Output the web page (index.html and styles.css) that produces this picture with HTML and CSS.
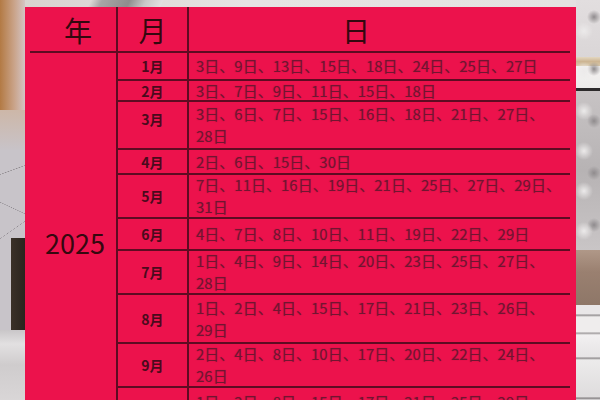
FILE: index.html
```html
<!DOCTYPE html>
<html lang="zh-CN">
<head>
<meta charset="utf-8">
<title>2025 日期表</title>
<link rel="stylesheet" href="styles.css">
</head>
<body>
<div class="scene">
  <div class="side side-left"></div>
  <div class="middle">
    <div class="top-band"></div>
    <div class="sheet">
      <div class="grid">
        <div class="head head-year">年</div>
        <div class="head head-month">月</div>
        <div class="head head-day">日</div>

        <div class="year">2025</div>

        <div class="month">1月</div>
        <div class="days">3日、9日、13日、15日、18日、24日、25日、27日</div>

        <div class="month">2月</div>
        <div class="days">3日、7日、9日、11日、15日、18日</div>

        <div class="month month-high">3月</div>
        <div class="days">3日、6日、7日、15日、16日、18日、21日、27日、<br>28日</div>

        <div class="month">4月</div>
        <div class="days">2日、6日、15日、30日</div>

        <div class="month">5月</div>
        <div class="days">7日、11日、16日、19日、21日、25日、27日、29日、<br>31日</div>

        <div class="month">6月</div>
        <div class="days">4日、7日、8日、10日、11日、19日、22日、29日</div>

        <div class="month">7月</div>
        <div class="days">1日、4日、9日、14日、20日、23日、25日、27日、<br>28日</div>

        <div class="month">8月</div>
        <div class="days">1日、2日、4日、15日、17日、21日、23日、26日、<br>29日</div>

        <div class="month">9月</div>
        <div class="days">2日、4日、8日、10日、17日、20日、22日、24日、<br>26日</div>

        <div class="month">10月</div>
        <div class="days days-top">1日、2日、8日、15日、17日、21日、25日、29日</div>
      </div>
    </div>
  </div>
  <div class="side side-right"></div>
</div>
</body>
</html>
```

FILE: styles.css
```css
* {
  box-sizing: border-box;
}

html, body {
  margin: 0;
  padding: 0;
}

body {
  width: 600px;
  height: 400px;
  overflow: hidden;
  font-family: "Noto Sans CJK SC", "Noto Sans", sans-serif;
  background: #d6d2d4;
}

.scene {
  display: flex;
  width: 600px;
  height: 400px;
  overflow: hidden;
}

.side {
  flex: none;
  height: 400px;
}

.side-left {
  width: 25px;
  background:
    /* vase */
    linear-gradient(to right, #3a3128, #2a241e) 11px 238px / 14px 92px no-repeat,
    /* plant branches */
    linear-gradient(160deg, transparent 49%, #8a8589 50%, transparent 51%) 0 150px / 25px 40px no-repeat,
    linear-gradient(25deg, transparent 49%, #8d888e 50%, transparent 51%) 0 190px / 25px 36px no-repeat,
    linear-gradient(145deg, transparent 49%, #918c92 50%, transparent 51%) 0 218px / 25px 24px no-repeat,
    /* floor */
    linear-gradient(#c9c6c8, #e2e0e1 20%, #cfcccd 50%, #d9d6d7) 0 330px / 25px 70px no-repeat,
    /* warm top-left light */
    linear-gradient(to right, #b37a44, #c9a287 55%, #d4c4c4) 0 0 / 25px 110px no-repeat,
    linear-gradient(#cdb7a8, #c8c3c8) 0 110px / 25px 40px no-repeat,
    #c8c4c9;
}

.side-right {
  width: 24px;
  background:
    /* couch cushions */
    linear-gradient(#e9e7e8 0, #e9e7e8 9px, #8e8a8c 10px, #efeded 12px, #efeded 27px, #9a9698 28px, #f2f0f1 30px, #e6e4e5 52px, #8a8688 53px, #ecebeb 55px, #dedcdd 92px, #7d797b 93px, #e5e3e4 95px) 0 305px / 24px 95px no-repeat,
    /* tan cushion */
    linear-gradient(#b09888, #9a8070 40%, #8e7768) 0 250px / 24px 55px no-repeat,
    /* textured wall art */
    radial-gradient(circle at 8px 20px, #eceaea 0, transparent 9px) 0 91px / 24px 40px repeat-y,
    radial-gradient(circle at 18px 30px, #8f8b8d 0, transparent 7px) 0 91px / 24px 52px repeat-y,
    linear-gradient(#c7c3c4, #b7b3b4 50%, #c9c5c6) 0 91px / 24px 159px no-repeat,
    /* dark frame line */
    linear-gradient(#2c2a2b, #2c2a2b) 0 88px / 24px 3px no-repeat,
    /* white shelf */
    linear-gradient(#f4f2f1, #ecebea) 0 66px / 24px 22px no-repeat,
    /* beige band */
    linear-gradient(#e3d7c0, #cdb593 50%, #d9c8aa) 0 57px / 24px 9px no-repeat,
    linear-gradient(#e2dedf, #dad6d7) 0 0 / 24px 57px no-repeat,
    #dcd8d9;
}

.middle {
  flex: none;
  width: 551px;
  height: 400px;
  display: flex;
  flex-direction: column;
}

.top-band {
  flex: none;
  height: 7px;
  background:
    linear-gradient(115deg, transparent 0, transparent 60px, #a7a5a6 70px, #8f8d8e 95px, #c9c7c8 110px, #e2e0e0 125px, transparent 126px),
    linear-gradient(to right, #d9d3d0, #e6e3e3 40%, #e4e1e1);
}

.sheet {
  flex: 1;
  min-height: 0;
  overflow: hidden;
  background: #ec124c;
  padding: 0 6px 0 5px;
}

.grid {
  display: grid;
  grid-template-columns: 86px 71px 1fr;
  grid-template-rows: 46px 28px 21px 48px 25px 44px 32px 44px 49px 44px 60px;
  color: #6f1430;
}

.head {
  border-bottom: 2px solid #5e0b22;
  display: flex;
  align-items: center;
  font-size: 28px;
  color: #33080f;
  line-height: 1;
  padding-top: 2px;
}

.head-year {
  justify-content: center;
  padding-left: 10px;
}

.head-month {
  justify-content: center;
  border-left: 2px solid #5e0b22;
}

.head-day {
  border-left: 2px solid #5e0b22;
  padding-left: 153px;
}

.year {
  grid-column: 1;
  grid-row: 2 / -1;
  font-size: 27px;
  color: #35080f;
  line-height: 36px;
  padding-top: 172px;
  padding-left: 4px;
  text-align: center;
}

.month {
  grid-column: 2;
  border-left: 2px solid #5e0b22;
  border-bottom: 2px solid #5e0b22;
  display: flex;
  align-items: center;
  justify-content: center;
  font-size: 14px;
  font-weight: 700;
  color: #4a0a1c;
}

.month-high {
  padding-bottom: 12px;
}

.days {
  grid-column: 3;
  border-left: 2px solid #5e0b22;
  border-bottom: 2px solid #5e0b22;
  display: flex;
  align-items: center;
  padding-left: 7px;
  font-size: 15px;
  line-height: 22px;
  white-space: nowrap;
  color: #711531;
  text-shadow: 0 0 1px rgba(113, 21, 49, 0.5);
}

.days-top {
  align-items: flex-start;
  padding-top: 3px;
}
```
